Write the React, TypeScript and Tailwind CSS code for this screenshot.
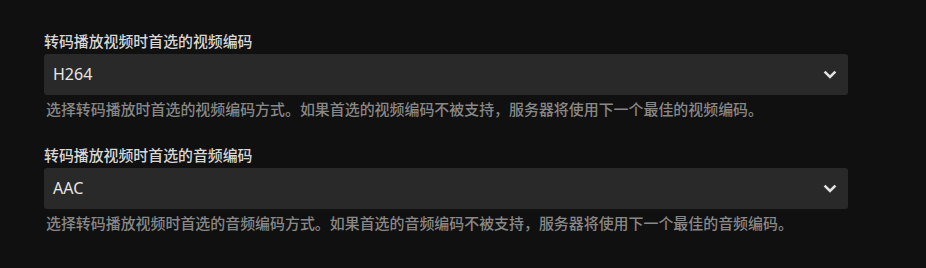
import React from "react";

interface SelectFieldProps {
  label: string;
  value: string;
  help: string;
}

function Chevron() {
  return (
    <svg width="14" height="9" viewBox="0 0 14 9" className="shrink-0">
      <path d="M1.6 1.6 L7 7 L12.4 1.6" fill="none" stroke="#e2e2e2" strokeWidth="2.6" />
    </svg>
  );
}

function SelectField({ label, value, help }: SelectFieldProps) {
  return (
    <div className="flex flex-col">
      <label className="text-[14.9px] font-medium leading-[20px] text-[#d8d8d8]">{label}</label>
      <div className="mt-[3px] flex h-[40.5px] items-center justify-between rounded-[3px] bg-[#292929] pl-[9px] pr-[11px]">
        <span className="font-['Noto_Sans',sans-serif] text-[16px] text-[#e6e6e6]">{value}</span>
        <Chevron />
      </div>
      <p className="mt-[4.5px] pl-[2px] text-[14.95px] font-medium leading-[20px] text-[#888888]">{help}</p>
    </div>
  );
}

export default function App() {
  return (
    <div className="h-[268px] w-full overflow-hidden bg-[#101010] font-['Noto_Sans','Noto_Sans_CJK_SC',sans-serif]">
      <div className="flex w-[848px] flex-col gap-[26px] pl-[44px] pt-[31px]">
        <SelectField
          label="转码播放视频时首选的视频编码"
          value="H264"
          help="选择转码播放时首选的视频编码方式。如果首选的视频编码不被支持，服务器将使用下一个最佳的视频编码。"
        />
        <SelectField
          label="转码播放视频时首选的音频编码"
          value="AAC"
          help="选择转码播放视频时首选的音频编码方式。如果首选的音频编码不被支持，服务器将使用下一个最佳的音频编码。"
        />
      </div>
    </div>
  );
}
